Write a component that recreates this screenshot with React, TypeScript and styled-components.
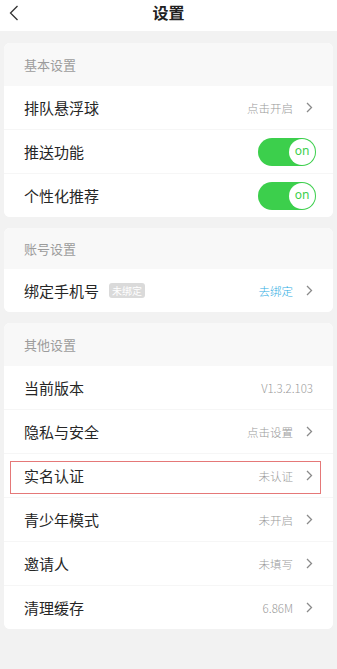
import styled, { createGlobalStyle } from "styled-components";

const GlobalStyle = createGlobalStyle`
  html, body {
    margin: 0;
    padding: 0;
    background: #f2f2f2;
    font-family: "Noto Sans CJK SC", "Noto Sans", sans-serif;
  }
`;

const Page = styled.div`
  width: 337px;
  min-height: 669px;
  background: #f2f2f2;
`;

const Header = styled.div`
  height: 31px;
  background: #fff;
  position: relative;
  display: flex;
  justify-content: center;
`;

const Title = styled.div`
  height: 24px;
  line-height: 24px;
  font-size: 16px;
  font-weight: 700;
  color: #222;
`;

const Back = styled.svg`
  position: absolute;
  left: 9px;
  top: 5px;
`;

const Cards = styled.div`
  display: flex;
  flex-direction: column;
  gap: 11px;
  padding: 12px 4px 0;
`;

const Card = styled.div`
  border-radius: 6px;
  overflow: hidden;
  background: #fff;
`;

const CardHead = styled.div<{ $h?: number }>`
  height: ${(p) => p.$h ?? 43}px;
  background: #f8f8f8;
  padding-left: 20px;
  display: flex;
  align-items: center;
  font-size: 13px;
  color: #9c9c9c;
`;

const Row = styled.div<{ $highlight?: boolean }>`
  position: relative;
  height: 43px;
  display: flex;
  align-items: center;
  padding: 0 20px;
  background: #fff;
  & + & {
    border-top: 1px solid #f6f6f6;
  }
  ${(p) =>
    p.$highlight &&
    `
    &::after {
      content: "";
      position: absolute;
      top: 7px;
      bottom: 3px;
      left: 6px;
      right: 12px;
      border: 1px solid #e57878;
      pointer-events: none;
    }
  `}
`;

const Label = styled.div`
  font-size: 15px;
  color: #262626;
`;

const Badge = styled.span`
  margin-left: 10px;
  height: 15px;
  padding: 0 3px;
  border-radius: 3px;
  background: #dadada;
  color: #fff;
  font-size: 10px;
  line-height: 15px;
`;

const Right = styled.div`
  margin-left: auto;
  display: flex;
  align-items: center;
  gap: 13px;
`;

const Value = styled.span<{ $blue?: boolean }>`
  font-size: 11.5px;
  font-weight: 300;
  color: ${(p) => (p.$blue ? "#33aee3" : "#9a9a9a")};
`;

const Toggle = styled.div`
  margin-left: auto;
  margin-right: -3px;
  width: 58px;
  height: 28px;
  border-radius: 14px;
  background: #3ccf4c;
  display: flex;
  align-items: center;
  justify-content: flex-end;
  padding-right: 1px;
  box-sizing: border-box;
`;

const Knob = styled.div`
  width: 26px;
  height: 26px;
  border-radius: 50%;
  background: #fff;
  color: #3ccf4c;
  font-family: "Noto Sans", sans-serif;
  font-size: 12px;
  line-height: 24px;
  text-align: center;
`;

const Chevron = () => (
  <svg width="7" height="11" viewBox="0 0 7 11">
    <path d="M1 1 L5.5 5.5 L1 10" fill="none" stroke="#8a8a8a" strokeWidth="1.3" />
  </svg>
);

type Item = {
  label: string;
  value?: string;
  blue?: boolean;
  arrow?: boolean;
  toggle?: boolean;
  badge?: string;
  highlight?: boolean;
};

const sections: { title: string; head?: number; items: Item[] }[] = [
  {
    title: "基本设置",
    items: [
      { label: "排队悬浮球", value: "点击开启", arrow: true },
      { label: "推送功能", toggle: true },
      { label: "个性化推荐", toggle: true },
    ],
  },
  {
    title: "账号设置",
    head: 41,
    items: [{ label: "绑定手机号", badge: "未绑定", value: "去绑定", blue: true, arrow: true }],
  },
  {
    title: "其他设置",
    items: [
      { label: "当前版本", value: "V1.3.2.103" },
      { label: "隐私与安全", value: "点击设置", arrow: true },
      { label: "实名认证", value: "未认证", arrow: true, highlight: true },
      { label: "青少年模式", value: "未开启", arrow: true },
      { label: "邀请人", value: "未填写", arrow: true },
      { label: "清理缓存", value: "6.86M", arrow: true },
    ],
  },
];

export default function App() {
  return (
    <Page>
      <GlobalStyle />
      <Header>
        <Back width="10" height="16" viewBox="0 0 10 16">
          <path d="M8.5 1 L1.5 8 L8.5 15" fill="none" stroke="#333" strokeWidth="1.3" />
        </Back>
        <Title>设置</Title>
      </Header>
      <Cards>
        {sections.map((s) => (
          <Card key={s.title}>
            <CardHead $h={s.head}>{s.title}</CardHead>
            {s.items.map((it) => (
              <Row key={it.label} $highlight={it.highlight}>
                <Label>{it.label}</Label>
                {it.badge && <Badge>{it.badge}</Badge>}
                {it.toggle ? (
                  <Toggle>
                    <Knob>on</Knob>
                  </Toggle>
                ) : (
                  <Right>
                    {it.value && <Value $blue={it.blue}>{it.value}</Value>}
                    {it.arrow && <Chevron />}
                  </Right>
                )}
              </Row>
            ))}
          </Card>
        ))}
      </Cards>
    </Page>
  );
}
